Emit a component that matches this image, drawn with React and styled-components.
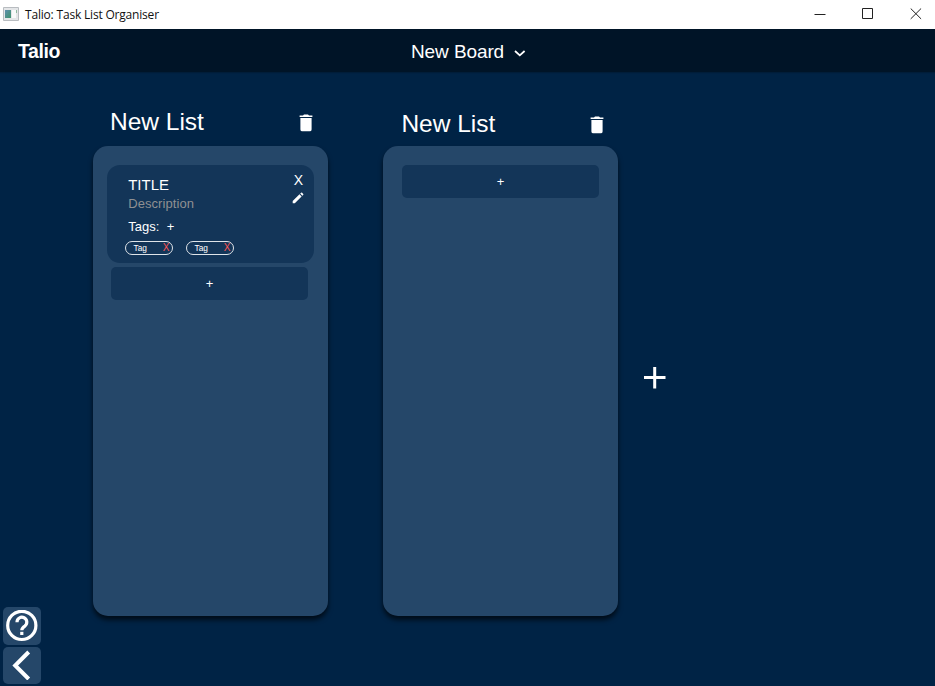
import React from "react";
import styled, { createGlobalStyle } from "styled-components";

const GlobalStyle = createGlobalStyle`
  * { box-sizing: border-box; }
  body { margin: 0; background: #002345; }
  button { font: inherit; color: inherit; border: 0; padding: 0; background: none; cursor: pointer; }
  h1, h2, h3, p { margin: 0; font-weight: 400; }
  svg { display: block; }
`;

const Window = styled.div`
  display: flex;
  flex-direction: column;
  width: 935px;
  height: 686px;
  overflow: hidden;
  background: #002345;
  color: #fff;
  font-family: "Liberation Sans", Arial, sans-serif;
`;

const TitleBar = styled.header`
  display: flex;
  align-items: center;
  height: 29px;
  padding: 0 0 2px 3px;
  background: #fff;
  color: #111;
`;

const WindowTitle = styled.span`
  flex: 1;
  margin-left: 6px;
  padding-top: 1px;
  font: 12px "Open Sans", sans-serif;
  letter-spacing: -0.19px;
  white-space: nowrap;
`;

const WindowControls = styled.div`
  display: grid;
  grid-template-columns: repeat(3, 48px);
  margin-right: -5px;
`;

const WindowButton = styled.button`
  display: grid;
  place-items: center;
  height: 26px;
`;

const NavBar = styled.nav`
  display: grid;
  grid-template-columns: 411px auto 1fr;
  align-items: center;
  height: 43px;
  background: #001427;
  box-shadow: 0 1px 1px rgba(0, 20, 39, 0.4);
`;

const Brand = styled.h1`
  padding: 1px 0 0 18px;
  font-size: 19.5px;
  font-weight: 700;
  line-height: 22px;
  letter-spacing: -0.4px;
`;

const BoardPicker = styled.button`
  display: flex;
  align-items: center;
  gap: 9.5px;
  padding-top: 3px;
  font-size: 19px;
  line-height: 22px;
  letter-spacing: -0.1px;

  svg { margin-top: 1px; }
`;

const Workspace = styled.main`
  display: flex;
  flex: 1;
  min-height: 0;
`;

const SideTools = styled.aside`
  display: flex;
  flex-direction: column;
  justify-content: flex-end;
  gap: 2px;
  width: 41px;
  padding: 0 0 2px 3px;
`;

const ToolButton = styled.button`
  display: grid;
  place-items: center;
  height: 37.5px;
  border-radius: 5px;
  background: #254769;
`;

const Lists = styled.div`
  display: flex;
  gap: 55.4px;
  padding: 34px 0 0 51.6px;
`;

const ListColumn = styled.section`
  width: 235px;
`;

const ListHeader = styled.div`
  display: flex;
  justify-content: space-between;
  align-items: flex-start;
  height: 40.4px;
  padding: ${(p) => (p.$lowered ? "4px 14px 0 18.4px" : "2px 14.6px 0 17.4px")};
`;

const ListName = styled.h2`
  font-size: 24.5px;
  line-height: 28px;
`;

const DeleteList = styled.button`
  margin-top: 6px;
`;

const ListPanel = styled.div`
  display: flex;
  flex-direction: column;
  align-items: center;
  gap: 4px;
  height: 470px;
  padding-top: 18.6px;
  border-radius: 15px;
  background: #254769;
  box-shadow: 0 4px 5px rgba(0, 0, 0, 0.65);
`;

const Card = styled.article`
  display: flex;
  flex-direction: column;
  width: 207px;
  height: 98px;
  margin-left: 0.8px;
  padding: 8px 9px 0 18px;
  border-radius: 13px;
  background: #133558;
`;

const CardTop = styled.div`
  display: flex;
  justify-content: space-between;
  height: 44px;
  padding-left: 3.2px;
`;

const CardTitle = styled.h3`
  padding-top: 2px;
  font-size: 15px;
  line-height: 19px;
`;

const CardDescription = styled.p`
  color: #8f9092;
  font-size: 13px;
  line-height: 20px;
  letter-spacing: 0.08px;
`;

const CardActions = styled.div`
  display: flex;
  flex-direction: column;
  align-items: center;
  gap: 5px;
  width: 13px;
  font-size: 14px;
  line-height: 14px;
`;

const TagsHeading = styled.div`
  display: flex;
  align-items: flex-start;
  gap: 7.5px;
  height: 24px;
  padding: 1px 0 0 3.2px;
  font-size: 13px;
  line-height: 18px;
`;

const TagRow = styled.div`
  display: flex;
  gap: 13px;
`;

const Tag = styled.span`
  display: flex;
  justify-content: space-between;
  align-items: center;
  width: 48px;
  height: 14px;
  padding: 0 2.6px 0 7.6px;
  border: 1px solid #dfe4e9;
  border-radius: 7px;
  font-size: 8.3px;
  line-height: 12px;
`;

const RemoveTag = styled.button`
  color: #ff5555;
  font-size: 10px;
  line-height: 12px;
`;

const AddCard = styled.button`
  width: 197px;
  height: 33px;
  margin-right: ${(p) => (p.$shifted ? "1.2px" : "0")};
  border-radius: 5px;
  background: #133558;
  font-size: 13px;
  line-height: 33px;
`;

const AddList = styled.button`
  align-self: flex-start;
  margin: 294px 0 0 25px;
`;

const TrashIcon = () => (
  <svg width="14" height="18" viewBox="0 0 14 18" fill="#fff">
    <path d="M.6 1.4H4L5 .4h4l1 1h3.4v1.7H.6zM1.4 4.1h11.2v11.3q0 1.9-1.9 1.9H3.3q-1.9 0-1.9-1.9z" />
  </svg>
);

const PencilIcon = () => (
  <svg width="12" height="12" viewBox="0 0 12 12" fill="#fff">
    <path d="M.7 9.1 7.5 2.3l2.1 2.1L2.8 11.2H.7zM8.2 1.6 9.1.8q.5-.5 1 0l1.1 1.1q.5.5 0 1l-.9.8z" />
  </svg>
);

const AppIcon = () => (
  <svg width="16" height="14" viewBox="0 0 16 14">
    <defs>
      <linearGradient id="app-pane" x2="1" y2="1">
        <stop stopColor="#5f8fae" />
        <stop offset="1" stopColor="#3f936c" />
      </linearGradient>
    </defs>
    <path d="M.5.5h15v13H.5z" fill="#e4e6e8" stroke="#b8bcc0" />
    <path d="M2 3h6v8H2z" fill="url(#app-pane)" />
    <path d="M9 3h4v8H9z" fill="#f8fafa" />
    <path d="M13 3h1v3h-1z" fill="#8fb99f" />
  </svg>
);

const TagChip = () => (
  <Tag>
    Tag<RemoveTag>X</RemoveTag>
  </Tag>
);

const TaskCard = () => (
  <Card>
    <CardTop>
      <div>
        <CardTitle>TITLE</CardTitle>
        <CardDescription>Description</CardDescription>
      </div>
      <CardActions>
        <button>X</button>
        <button aria-label="Edit card"><PencilIcon /></button>
      </CardActions>
    </CardTop>
    <TagsHeading>
      Tags:<button>+</button>
    </TagsHeading>
    <TagRow>
      <TagChip />
      <TagChip />
    </TagRow>
  </Card>
);

const TaskList = ({ lowered, children }) => (
  <ListColumn>
    <ListHeader $lowered={lowered}>
      <ListName>New List</ListName>
      <DeleteList aria-label="Delete list"><TrashIcon /></DeleteList>
    </ListHeader>
    <ListPanel>
      {children}
      <AddCard $shifted={Boolean(children)}>+</AddCard>
    </ListPanel>
  </ListColumn>
);

export default function App() {
  return (
    <>
      <GlobalStyle />
      <Window>
        <TitleBar>
          <AppIcon />
          <WindowTitle>Talio: Task List Organiser</WindowTitle>
          <WindowControls>
            <WindowButton aria-label="Minimize">
              <svg width="12" height="12" stroke="#222"><path d="M.5 6.5h11" /></svg>
            </WindowButton>
            <WindowButton aria-label="Maximize">
              <svg width="12" height="12" fill="none" stroke="#222"><path d="M.5.5h10v10H.5z" /></svg>
            </WindowButton>
            <WindowButton aria-label="Close">
              <svg width="12" height="12" stroke="#222"><path d="m.7.5 10.4 10.4M11.1.5.7 10.9" /></svg>
            </WindowButton>
          </WindowControls>
        </TitleBar>
        <NavBar>
          <Brand>Talio</Brand>
          <BoardPicker>
            New Board
            <svg width="12" height="8" fill="none" stroke="#fff" strokeWidth="1.8"><path d="m1 2 4.8 4.4L10.6 2" /></svg>
          </BoardPicker>
        </NavBar>
        <Workspace>
          <SideTools>
            <ToolButton aria-label="Help">
              <svg width="32" height="32" viewBox="0 0 32 32" fill="none" stroke="#fff" strokeWidth="3.2">
                <circle cx="15.8" cy="15.4" r="14.1" />
                <path d="M11 12.2a4.9 4.9 0 1 1 7.8 3.9q-3 2.1-3 4.1" />
                <path d="M15.8 21.8v3.2" />
              </svg>
            </ToolButton>
            <ToolButton aria-label="Back">
              <svg width="20" height="30" viewBox="0 0 20 30" fill="none" stroke="#fff" strokeWidth="4"><path d="M16.7 2 3.2 15.5 16.7 29" /></svg>
            </ToolButton>
          </SideTools>
          <Lists>
            <TaskList>
              <TaskCard />
            </TaskList>
            <TaskList lowered />
          </Lists>
          <AddList aria-label="Add list">
            <svg width="24" height="24" stroke="#fff" strokeWidth="3"><path d="M1 11.5h21.5M11.7 1v21.5" /></svg>
          </AddList>
        </Workspace>
      </Window>
    </>
  );
}
